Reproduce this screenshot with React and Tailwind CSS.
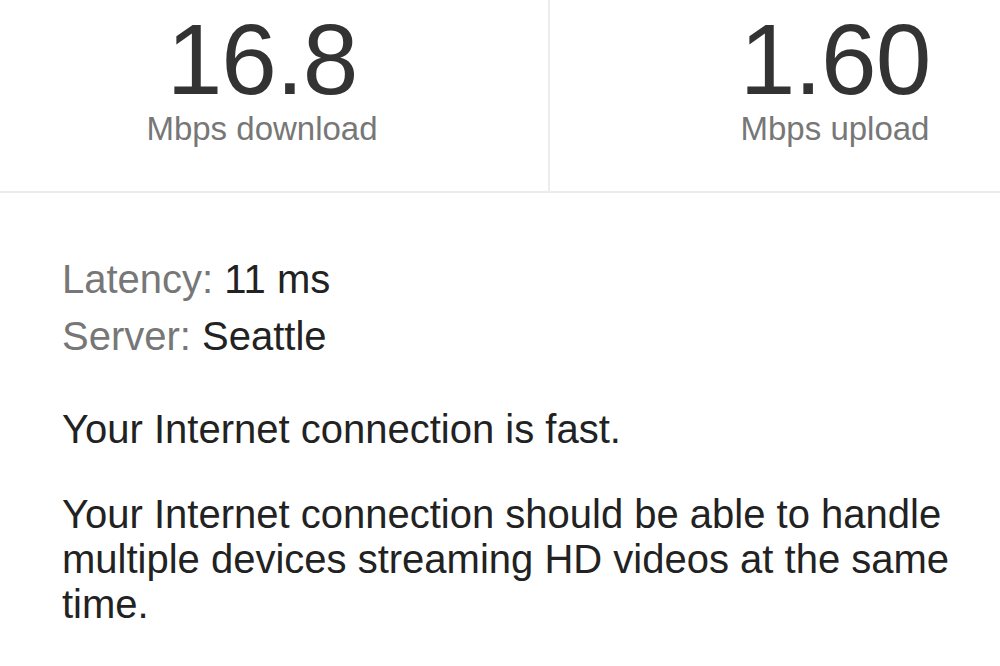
export default function App() {
  return (
    <div className="w-[1000px] h-[666px] overflow-hidden bg-white font-['Liberation_Sans',Arial,sans-serif]">
      {/* results header, the page is scrolled slightly so the grid starts off screen */}
      <div className="border-b-2 border-[#ececec]">
        <div className="ml-[-24px] grid w-[1144px] grid-cols-2">
          <div className="flex flex-col items-center pt-[9px] pb-[46px]">
            <div className="text-[100px] leading-none tracking-[-1px] text-[#333]">16.8</div>
            <div className="mt-[3px] text-[33px] leading-none text-[#777]">Mbps download</div>
          </div>
          <div className="flex flex-col items-center border-l-2 border-[#ececec] pt-[9px] pb-[46px]">
            <div className="text-[100px] leading-none tracking-[-1px] text-[#333]">1.60</div>
            <div className="mt-[3px] text-[33px] leading-none text-[#777]">Mbps upload</div>
          </div>
        </div>
      </div>

      <div className="pl-[62px] pr-[20px] pt-[58px] text-[40px] text-[#222]">
        <div className="leading-[57px]">
          <div>
            <span className="text-[#777]">Latency:</span> 11 ms
          </div>
          <div>
            <span className="text-[#777]">Server:</span> Seattle
          </div>
        </div>
        <p className="mt-[42px] leading-[45px]">Your Internet connection is fast.</p>
        <p className="mt-[40px] leading-[45px]">
          Your Internet connection should be able to handle multiple devices streaming HD videos at the same time.
        </p>
      </div>
    </div>
  )
}
